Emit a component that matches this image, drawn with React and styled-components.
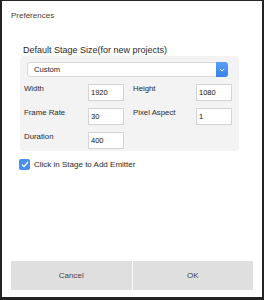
import React, { useState } from 'react'
import styled, { createGlobalStyle } from 'styled-components'

const GlobalStyle = createGlobalStyle`
  html, body {
    margin: 0;
    padding: 0;
    height: 300px;
    overflow: hidden;
    background: #232323;
    font-family: "Liberation Sans", Arial, sans-serif;
  }
`

const Dialog = styled.div`
  margin: 1px 2px 0 2px;
  height: 296px;
  background: #fff;
  display: flex;
  flex-direction: column;
`

const Title = styled.div`
  padding: 10px 0 0 9px;
  font-size: 8px;
  line-height: 10px;
  color: #444;
`

const Body = styled.div`
  padding: 0 23px 0 18px;
`

const Heading = styled.div`
  margin: 24px 0 0 3px;
  font-size: 9px;
  line-height: 11px;
  color: #2a2a2a;
`

const Panel = styled.div`
  background: #f3f3f3;
  border-radius: 4px;
  padding: 6px 5px 2px 4px;
  display: grid;
  grid-template-columns: 55px 36px 54px 36px;
  column-gap: 9px;
  row-gap: 7px;
`

const Select = styled.div`
  grid-column: 1 / -1;
  margin: 0 4px 0 3px;
  height: 15px;
  box-sizing: border-box;
  border: 1px solid #dadada;
  border-radius: 3px;
  background: #fff;
  display: flex;
  align-items: center;
  font-size: 7.6px;
  color: #222;
  padding-left: 6px;
  position: relative;
`

const SelectArrow = styled.div`
  position: absolute;
  right: -1px;
  top: -1px;
  width: 12px;
  height: 15px;
  border-radius: 0 3px 3px 0;
  background: linear-gradient(#5b9ff5, #3a82ec);
  display: flex;
  align-items: center;
  justify-content: center;
`

const Label = styled.div`
  align-self: start;
  font-size: 7.8px;
  line-height: 10px;
  color: #2a2a2a;
`

const Input = styled.div`
  height: 17px;
  box-sizing: border-box;
  border: 1px solid #d4d4d4;
  background: #fff;
  font-size: 7.5px;
  color: #111;
  display: flex;
  align-items: center;
  padding-left: 2px;
`

const CheckRow = styled.label`
  margin: 8px 0 0 -1px;
  display: flex;
  align-items: center;
  gap: 4px;
  font-size: 8px;
  color: #2a2a2a;
  cursor: pointer;
`

const Box = styled.span`
  width: 11px;
  height: 11px;
  border-radius: 2px;
  background: ${p => (p.checked ? '#4a8ef0' : '#fff')};
  border: ${p => (p.checked ? 'none' : '1px solid #bbb')};
  box-sizing: border-box;
  display: flex;
  align-items: center;
  justify-content: center;
`

const Footer = styled.div`
  margin-top: auto;
  padding: 0 9px 7px 9px;
  display: grid;
  grid-template-columns: 1fr 1fr;
  column-gap: 1px;
`

const Button = styled.button`
  height: 29px;
  border: none;
  background: #dfdfdf;
  font-family: inherit;
  font-size: 8px;
  color: #444;
  padding: 0;
  cursor: pointer;
`

function App() {
  const [checked, setChecked] = useState(true)

  return (
    <>
      <GlobalStyle />
      <Dialog>
        <Title>Preferences</Title>
        <Body>
          <Heading>Default Stage Size(for new projects)</Heading>
          <Panel>
            <Select>
              Custom
              <SelectArrow>
                <svg width="6" height="4" viewBox="0 0 6 4">
                  <path d="M0.8 0.8 L3 3 L5.2 0.8" fill="none" stroke="#fff" strokeWidth="1" />
                </svg>
              </SelectArrow>
            </Select>
            <Label>Width</Label>
            <Input>1920</Input>
            <Label>Height</Label>
            <Input>1080</Input>
            <Label>Frame Rate</Label>
            <Input>30</Input>
            <Label>Pixel Aspect</Label>
            <Input>1</Input>
            <Label>Duration</Label>
            <Input>400</Input>
          </Panel>
          <CheckRow onClick={() => setChecked(!checked)}>
            <Box checked={checked}>
              {checked && (
                <svg width="8" height="7" viewBox="0 0 8 7">
                  <path d="M1 3.6 L3 5.6 L7 1" fill="none" stroke="#fff" strokeWidth="1.3" />
                </svg>
              )}
            </Box>
            Click in Stage to Add Emitter
          </CheckRow>
        </Body>
        <Footer>
          <Button>Cancel</Button>
          <Button>OK</Button>
        </Footer>
      </Dialog>
    </>
  )
}

export default App
